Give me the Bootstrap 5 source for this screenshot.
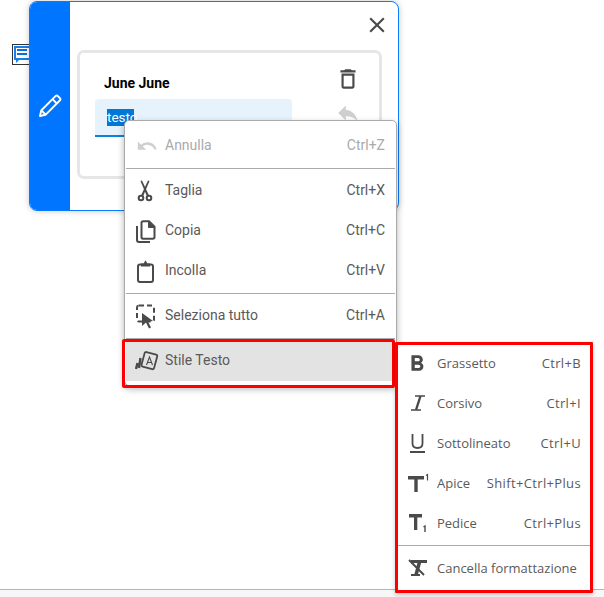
<!DOCTYPE html>
<html lang="it">
<head>
<meta charset="utf-8">
<title>Stile Testo</title>
<link href="https://cdn.jsdelivr.net/npm/bootstrap@5.3.0/dist/css/bootstrap.min.css" rel="stylesheet">
<style>
html,body{height:597px;overflow:hidden;background:#fff}
body{font-family:Roboto,"Liberation Sans",sans-serif;color:#5a5a5a;position:relative}
.stage{height:597px}
.note-ico{position:absolute;left:12px;top:44px;width:19px;height:22px}
.dlg{width:370px;height:210px;margin:1px 0 0 29px;border:1px solid #0a7bff;border-radius:8px;overflow:hidden;box-shadow:0 0 6px rgba(0,0,0,.22);position:relative;z-index:1;background:#fff}
.rail{width:41px;background:#0075ff;margin:-1px 0 -1px -1px}
.close-x{height:48px;padding:10px 8px 0 0}
.inner{width:305px;height:129px;margin-left:7px;border:3px solid #e6e6e6;border-radius:7px}
.name{font-size:14px;font-weight:700;color:#000;margin:21px 0 0 24px;line-height:18px}
.inp{width:197px;height:38px;margin:7px 0 0 15px;background:#e6f3fd;border-bottom:2px solid #0a84d8;border-radius:4px 4px 0 0;padding:10px 0 0 12px;font-size:13.5px;line-height:17px}
.sel{display:inline-block;background:#0078d7;color:#fff;width:27px;height:17px}
.side{margin-left:43px;padding-top:13px}
.m1{position:absolute;left:124px;top:120px;width:273px;height:266px;min-width:0;padding:5px 1px 0;margin:0;border:1px solid #aaa;border-radius:5px;box-shadow:0 3px 7px rgba(0,0,0,.3);z-index:2;display:block;font-size:14px;background:#fff}
.m1 .dropdown-item{height:40px;padding:0 10px 2px 9px;color:#5a5a5a;font-size:14px;display:flex;align-items:center;line-height:1}
.m1 .dropdown-item.off{color:#aaa}
.m1 .dropdown-divider{margin:2px 0;border-top:1px solid #aaa;opacity:1}
.m1 .ic{width:30px;flex:none;display:flex;position:relative;top:1px}
.hl{background:#e3e3e3!important}
.redbox{position:absolute;left:-3px;top:218px;width:273px;height:49px;border:3px solid #f00;border-radius:2px;pointer-events:none}
.m2{position:absolute;left:395px;top:342px;width:198px;height:251px;min-width:0;margin:0;padding:0;border:3px solid #f00;border-radius:1px;z-index:3;display:block;background:#fff;box-shadow:0 2px 4px rgba(0,0,0,.2)}
.m2 .dropdown-item{height:36px;margin-bottom:4px;padding:0 9px 0 10px;color:#5a5a5a;font:13px "Open Sans","Liberation Sans",sans-serif;display:flex;align-items:center}
.m2 .dropdown-divider{margin:0 0 4px;border-top:1px solid #aaa;opacity:1}
.m2 .ic{width:29px;flex:none;display:flex}
.keys{letter-spacing:.35px}
.foot{height:8px;border-top:1px solid #b5b5b5;background:#f7f7f7}
</style>
</head>
<body>
<div class="stage d-flex flex-column">
  <svg class="note-ico" viewBox="0 0 19 22"><rect x=".5" y=".5" width="18" height="20" fill="#fff" stroke="#333"/><path d="M2 2h16v14H7l-3 3v-3H2z" fill="#1a7fe8"/><path d="M4 4h14v10H4z" fill="#fff"/><rect x="5" y="5" width="10" height="2" fill="#0a70e0"/><rect x="5" y="9" width="10" height="2" fill="#0a70e0"/></svg>

  <div class="dlg d-flex">
    <div class="rail d-flex align-items-center justify-content-center">
      <svg width="24" height="24" viewBox="0 0 24 24" fill="none" stroke="#fff" stroke-width="1.900" stroke-linejoin="round"><path d="M2 22l1.200-5.500L17.500 2.200a1.800 1.800 0 0 1 2.500 0l1.800 1.800a1.800 1.800 0 0 1 0 2.500L7.500 20.800z"/><path d="M14.500 5.200l4.300 4.300M3.500 16.500l4 4"/></svg>
    </div>
    <div class="flex-grow-1">
      <div class="close-x d-flex justify-content-end">
        <svg width="26" height="26" viewBox="0 0 24 24" fill="#4a4a4a"><path d="M19 6.410L17.590 5 12 10.590 6.410 5 5 6.410 10.590 12 5 17.590 6.410 19 12 13.410 17.590 19 19 17.590 13.410 12z"/></svg>
      </div>
      <div class="inner d-flex">
        <div>
          <div class="name">June June</div>
          <div class="inp"><span class="sel">testo</span></div>
        </div>
        <div class="side">
          <svg class="d-block" width="26" height="26" viewBox="0 0 24 24" fill="#4a4a4a"><path d="M6 19c0 1.100.9 2 2 2h8c1.100 0 2-.9 2-2V7H6v12zM8 9h8v10H8V9zm7.500-5l-1-1h-5l-1 1H5v2h14V4z"/></svg>
          <svg class="d-block mt-2" width="26" height="26" viewBox="0 0 24 24" fill="#cfcfcf"><path d="M10 9V5l-7 7 7 7v-4.100c5 0 8.500 1.600 11 5.100-1-5-4-10-11-11z"/></svg>
        </div>
      </div>
    </div>
  </div>

  <div class="foot mt-auto"></div>
</div>

<div class="dropdown-menu m1">
  <a class="dropdown-item off" href="#"><span class="ic"><svg width="24" height="22" viewBox="0 0 24 24" fill="#cfcfcf"><path d="M12.500 8c-2.650 0-5.050.99-6.900 2.600L2 7v9h9l-3.620-3.620c1.390-1.160 3.160-1.880 5.120-1.880 3.540 0 6.550 2.310 7.600 5.500l2.370-.78C21.080 11.030 17.150 8 12.500 8z"/></svg></span><span>Annulla</span><span class="ms-auto">Ctrl+Z</span></a>
  <div class="dropdown-divider"></div>
  <a class="dropdown-item" href="#"><span class="ic"><svg width="20" height="22" viewBox="0 0 20 22" fill="#4a4a4a" stroke="#4a4a4a"><path d="M5.500 1l1.500-.5 7 15-2 1z" stroke="none"/><path d="M14.500 1L13 .5l-7 15 2 1z" stroke="none"/><circle cx="6" cy="18" r="2.300" fill="none" stroke-width="2"/><circle cx="14" cy="18" r="2.300" fill="none" stroke-width="2"/></svg></span><span>Taglia</span><span class="ms-auto">Ctrl+X</span></a>
  <a class="dropdown-item" href="#"><span class="ic"><svg width="21" height="23" viewBox="0 0 21 23" fill="none" stroke="#4a4a4a" stroke-width="2"><path d="M2 6v14c0 1 .6 2 2 2h11"/><path d="M6.500 17V3c0-1 .6-1.800 1.800-1.800H14l5.500 5.500V17c0 1-.6 1.800-1.800 1.800H8c-1 0-1.500-.8-1.500-1.800z"/><path d="M13.500 1.500v6h6" fill="#4a4a4a" stroke-width="1"/></svg></span><span>Copia</span><span class="ms-auto">Ctrl+C</span></a>
  <a class="dropdown-item" href="#"><span class="ic"><svg width="20" height="23" viewBox="0 0 20 23" fill="none" stroke="#4a4a4a" stroke-width="2"><rect x="3" y="4.500" width="15" height="17.500" rx="2"/><path d="M6.500 6V4H9l1.500-2.500L12 4h2.500v2z" fill="#4a4a4a" stroke-width="1.200"/></svg></span><span>Incolla</span><span class="ms-auto">Ctrl+V</span></a>
  <div class="dropdown-divider"></div>
  <a class="dropdown-item" href="#"><span class="ic"><svg width="21" height="25" viewBox="0 0 21 25"><rect x="2" y="1.500" width="17" height="16" rx="2" fill="none" stroke="#4a4a4a" stroke-width="2" stroke-dasharray="5 3"/><path d="M7 9l11 8-5 .6 3 6-2 1-3-6-4 3.500z" fill="#4a4a4a"/></svg></span><span>Seleziona tutto</span><span class="ms-auto">Ctrl+A</span></a>
  <div class="dropdown-divider"></div>
  <a class="dropdown-item hl" href="#"><span class="ic"><svg width="24" height="22" viewBox="0 0 24 22" fill="none" stroke="#4a4a4a"><rect x="8" y="3" width="13" height="15" rx="1.500" transform="rotate(15 14 10)" fill="#e3e3e3" stroke-width="1.800"/><path d="M11.500 15l3-8 3 8m-5-2.500h4" stroke-width="1.100"/><path d="M5.500 8l-1.500 10M2.500 13L1 19" stroke-width="2.400"/></svg></span><span>Stile Testo</span></a>
  <div class="redbox"></div>
</div>

<div class="dropdown-menu m2">
  <a class="dropdown-item" href="#"><span class="ic"><svg width="18" height="20" viewBox="4 2 16 18" fill="#4a4a4a"><path d="M15.600 10.790c.97-.67 1.650-1.770 1.650-2.790 0-2.260-1.750-4-4-4H7v14h7.040c2.090 0 3.710-1.700 3.710-3.790 0-1.520-.86-2.820-2.150-3.420zM10 6.500h3c.83 0 1.500.67 1.500 1.500s-.67 1.500-1.500 1.500h-3v-3zm3.500 9H10v-3h3.500c.83 0 1.500.67 1.500 1.500s-.67 1.500-1.500 1.500z"/></svg></span><span>Grassetto</span><span class="ms-auto keys">Ctrl+B</span></a>
  <a class="dropdown-item" href="#"><span class="ic"><svg width="20" height="20" viewBox="0 0 20 20" fill="none" stroke="#4a4a4a"><path d="M7 3h10M3 17h10" stroke-width="1.700"/><path d="M12.500 3L8 17" stroke-width="2.400"/></svg></span><span>Corsivo</span><span class="ms-auto keys">Ctrl+I</span></a>
  <a class="dropdown-item" href="#"><span class="ic"><svg width="20" height="22" viewBox="0 0 20 22" fill="none" stroke="#4a4a4a"><path d="M4.500 2v9.500c0 3 2 4.500 5 4.500s5-1.500 5-4.500V2" stroke-width="1.800"/><path d="M2 20h15" stroke-width="2"/></svg></span><span>Sottolineato</span><span class="ms-auto keys">Ctrl+U</span></a>
  <a class="dropdown-item" href="#"><span class="ic"><svg width="24" height="20" viewBox="0 0 24 20" fill="#4a4a4a"><path d="M0 3h16v3.500H9.700V19H6.300V6.500H0z"/><path d="M18 2.500l1.500-1v6" fill="none" stroke="#4a4a4a" stroke-width="1.200"/></svg></span><span>Apice</span><span class="ms-auto keys">Shift+Ctrl+Plus</span></a>
  <a class="dropdown-item" href="#"><span class="ic"><svg width="24" height="20" viewBox="0 0 24 20" fill="#4a4a4a"><path d="M1 1h13v3.500H9.300V17H6V4.500H1z"/><path d="M15.500 14l1.500-1v6" fill="none" stroke="#4a4a4a" stroke-width="1.400"/></svg></span><span>Pedice</span><span class="ms-auto keys">Ctrl+Plus</span></a>
  <div class="dropdown-divider"></div>
  <a class="dropdown-item" href="#"><span class="ic"><svg width="20" height="18" viewBox="0 0 20 18" fill="none" stroke="#4a4a4a"><path d="M3 2.500h16" stroke-width="3"/><path d="M11.500 3L8 16" stroke-width="3.500"/><path d="M1 1l15 15" stroke-width="2"/><path d="M3 16h9" stroke-width="2"/></svg></span><span>Cancella formattazione</span></a>
</div>
</body>
</html>
